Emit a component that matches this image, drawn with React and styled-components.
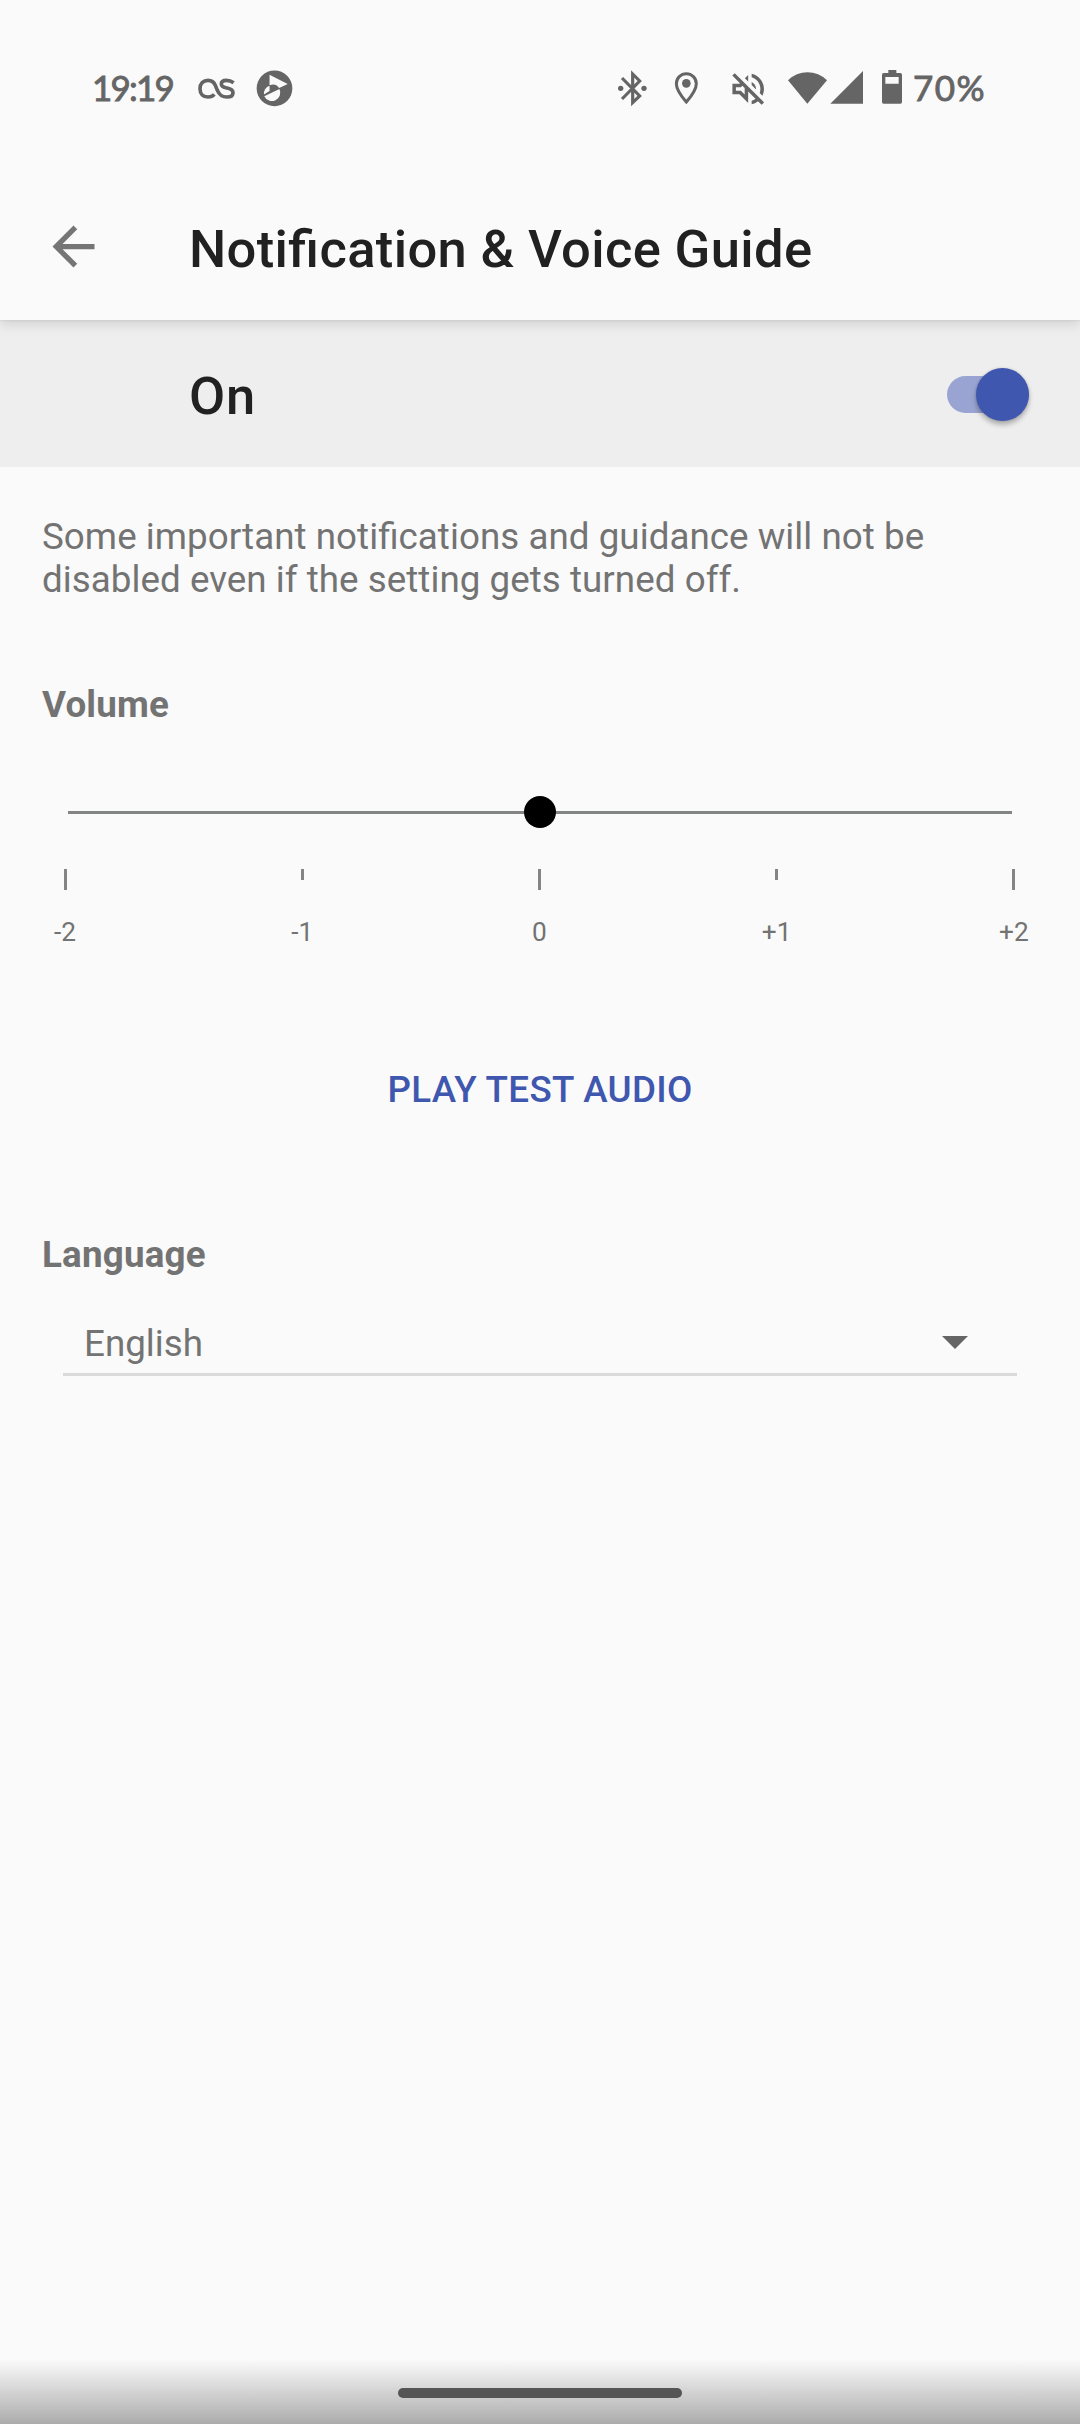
import React, {useState} from 'react';
import styled, {createGlobalStyle} from 'styled-components';

const GlobalStyle = createGlobalStyle`
  body {
    margin: 0;
    background: #fafafa;
    font-family: Roboto, 'Noto Sans', sans-serif;
    font-feature-settings: 'liga' 1;
  }
  button {
    border: 0;
    padding: 0;
    background: none;
    font: inherit;
    color: inherit;
  }
`;

const Screen = styled.div`
  display: flex;
  flex-direction: column;
  height: 2424px;
  width: 1080px;
  overflow: hidden;
  background: #fafafa;
`;
const Header = styled.header`
  height: 320px;
  z-index: 1;
  box-sizing: border-box;
  background: #fafafa;
  box-shadow: 0 4px 12px rgba(0, 0, 0, 0.13), 0 1px 2px rgba(0, 0, 0, 0.05);
`;
const StatusBar = styled.div`
  display: flex;
  justify-content: space-between;
  height: 124px;
  padding: 50px 93px 0 92px;
  box-sizing: border-box;
  color: #656565;
`;
const StatusGroup = styled.div`
  display: flex;
  height: 76px;
  align-items: center;
`;
const StatusText = styled.span`
  font-family: Lato, sans-serif;
  font-size: 35px;
  font-weight: 400;
  line-height: 42px;
  margin-bottom: 3px;
  white-space: nowrap;
  -webkit-text-stroke: 0.9px currentColor;
`;
const Clock = styled (StatusText)`
  width: 81px;
  letter-spacing: -1.8px;
`;
const BatteryLevel = styled (StatusText)`
  width: 74px;
  margin-left: 11px;
  letter-spacing: 1.5px;
`;
const StatusIcon = styled.svg`
  display: block;
  flex: none;
  height: 76px;
  width: ${props => props.$width}px;
  margin-left: ${props => props.$gap || 0}px;
  fill: currentColor;
`;
const Toolbar = styled.div`
  display: flex;
  align-items: flex-start;
  height: 196px;
  box-sizing: border-box;
  padding: 91px 42px 0;
`;
const BackButton = styled.button`
  display: flex;
  width: 147px;
  height: 63px;
  color: #757575;
`;
const Title = styled.h1`
  margin: 3px 0 0;
  font-size: 52.5px;
  font-weight: 500;
  line-height: 62px;
  letter-spacing: 0.36px;
  color: #212121;
  white-space: nowrap;
`;
const SwitchBar = styled.div`
  display: flex;
  align-items: flex-start;
  justify-content: space-between;
  height: 147px;
  padding: 45px 51px 0 189px;
  box-sizing: border-box;
  background: #eeeeee;
`;
const SwitchLabel = styled.span`
  font-size: 52.5px;
  font-weight: 500;
  line-height: 62px;
  letter-spacing: 0.8px;
  color: #212121;
`;
const SwitchTrack = styled.button`
  display: flex;
  align-items: center;
  justify-content: ${props => (props.$on ? 'flex-end' : 'flex-start')};
  width: 82.5px;
  height: 37px;
  margin-top: 11px;
  border-radius: 19px;
  background: ${props => (props.$on ? '#99a4d2' : '#b5b5b5')};
`;
const SwitchThumb = styled.span`
  flex: none;
  width: 53px;
  height: 53px;
  border-radius: 50%;
  background: ${props => (props.$on ? '#3f57ae' : '#fafafa')};
  box-shadow: 0 4px 5px rgba(0, 0, 0, 0.26), 0 0 3px rgba(0, 0, 0, 0.14);
`;
const Content = styled.main`
  display: flex;
  flex: 1;
  flex-direction: column;
  padding: 48px 42px 0;
  font-size: 36.75px;
  line-height: 43px;
  color: #737373;
`;
const Description = styled.p`
  margin: 0;
  letter-spacing: 0.04px;
`;
const SectionTitle = styled.h2`
  margin: ${props => props.$top}px 0 0;
  font-size: 36.75px;
  font-weight: 700;
  line-height: 43px;
  letter-spacing: 0.2px;
`;
const Slider = styled.div`
  display: flex;
  align-items: center;
  justify-content: center;
  height: 32px;
  margin: 70px 26px 0;
  background: linear-gradient(#838584, #838584) center 15px / 100% 3px no-repeat;
`;
const SliderThumb = styled.div`
  width: 32px;
  height: 32px;
  border-radius: 50%;
  background: #000;
`;
const Scale = styled.div`
  display: flex;
  width: 1186px;
  margin: 41px 0 0 -95.6px;
`;
const Step = styled.div`
  display: flex;
  flex: 1;
  flex-direction: column;
  align-items: center;
`;
const Tick = styled.span`
  width: 3px;
  height: ${props => (props.$major ? 21 : 11)}px;
  margin-bottom: ${props => (props.$major ? 27 : 37)}px;
  background: #838584;
`;
const StepLabel = styled.span`
  font-size: 26.25px;
  line-height: 31px;
`;
const PlayButton = styled.button`
  align-self: center;
  margin-top: 120px;
  font-size: 36.75px;
  font-weight: 500;
  line-height: 43px;
  letter-spacing: 0.3px;
  color: #3f57ae;
`;
const Select = styled.button`
  display: flex;
  align-items: flex-start;
  justify-content: space-between;
  height: 54px;
  margin: 46px 21px 0;
  padding: 0 49.5px 0 21px;
  border-bottom: 3px solid #dadada;
  box-sizing: border-box;
  color: #737373;
`;
const DropdownArrow = styled.span`
  width: 0;
  height: 0;
  margin-top: 14px;
  border-top: 13px solid #656565;
  border-left: 13px solid transparent;
  border-right: 13px solid transparent;
`;
const NavigationBar = styled.footer`
  display: flex;
  justify-content: center;
  height: 64px;
  padding-top: 28px;
  box-sizing: border-box;
  background: linear-gradient(#fafafa, #acacac);
`;
const HomeHandle = styled.div`
  width: 284px;
  height: 10px;
  border-radius: 5px;
  background: #555;
`;

// status icons are drawn on a grid of three units per pixel
const LastFmIcon = () => (
  <StatusIcon viewBox="350 0 117 228" $width={39} $gap={24}>
    <path
      d="M460 98C453 93 446 91 438 91C428 91 423 95 423 102C423 110 430 112 440 114C451 116 458 119 458 128C458 137 452 141 440 141C424 141 417 135 411 121L405 106C401 96 395 91 383 91C369 91 359 101 359 116C359 132 369 141 383 141C391 141 397 139 402 133"
      fill="none"
      stroke="currentColor"
      strokeWidth="11"
    />
  </StatusIcon>
);
const PlayerIcon = () => (
  <StatusIcon viewBox="526 0 112 228" $width={37} $gap={20}>
    <circle cx="582" cy="115" r="54" />
    <path d="M567 74L622 102L596 114A24 24 0 0 0 567 106z" fill="#fafafa" />
    <path d="M567 107V123L550 134A25 25 0 0 1 567 107z" fill="#fafafa" />
    <path d="M551 139L597 117A24 24 0 0 1 551 139z" fill="#fafafa" />
  </StatusIcon>
);
const BluetoothIcon = () => (
  <StatusIcon viewBox="54 0 87 228" $width={29}>
    <circle cx="62" cy="115" r="8" />
    <circle cx="132" cy="115" r="8" />
    <path
      d="M66 84L119 138L98 158V72L119 93L66 147"
      fill="none"
      stroke="currentColor"
      strokeWidth="9.5"
    />
  </StatusIcon>
);
const LocationIcon = () => (
  <StatusIcon viewBox="222 0 75 228" $width={25} $gap={27}>
    <path
      d="M259 156C240 134 229 118 229 101A30 30 0 0 1 289 101C289 118 278 134 259 156z"
      fill="none"
      stroke="currentColor"
      strokeWidth="9"
    />
    <circle cx="259" cy="100" r="13" />
  </StatusIcon>
);
const MutedIcon = () => (
  <StatusIcon viewBox="396 0 99 228" $width={33} $gap={33}>
    <path
      transform="translate(381.5 54) scale(5.25)"
      d="M4.34 2.93L2.93 4.34 7.29 8.7 7 9H3v6h4l5 5v-6.59l4.18 4.18c-.65.49-1.38.88-2.18 1.11v2.06c1.34-.3 2.57-.92 3.61-1.75l2.05 2.05 1.41-1.41L4.34 2.93zM10 15.17L7.83 13H5v-2h2.83l.88-.88L10 11.41v3.76zM19 12c0 .82-.15 1.61-.41 2.34l1.53 1.53c.56-1.17.88-2.48.88-3.87 0-4.28-2.99-7.86-7-8.77v2.06c2.89.86 5 3.54 5 6.71zm-7-8l-1.88 1.88L12 7.76V4zm4.5 8c0-1.77-1.02-3.29-2.5-4.03v1.79l2.48 2.48c.01-.08.02-.16.02-.24z"
    />
  </StatusIcon>
);
const WifiIcon = () => (
  <StatusIcon viewBox="21 0 123 228" $width={41} $gap={22}>
    <path d="M24 91A82 82 0 0 1 141 91L82 161z" />
  </StatusIcon>
);
const SignalIcon = () => (
  <StatusIcon viewBox="150 0 102 228" $width={34} $gap={2}>
    <path d="M249 63V161H151z" />
  </StatusIcon>
);
const BatteryIcon = () => (
  <StatusIcon viewBox="306 0 60 228" $width={20} $gap={18}>
    <path
      fillRule="evenodd"
      d="M325 60H349V69H361Q366 69 366 74V156Q366 161 361 161H311Q306 161 306 156V74Q306 69 311 69H325zM316 81V101H356V81z"
    />
  </StatusIcon>
);

const steps = [
  {label: '-2', major: true},
  {label: '-1', major: false},
  {label: '0', major: true},
  {label: '+1', major: false},
  {label: '+2', major: true},
];

const App = () => {
  const [enabled, setEnabled] = useState (true);

  return (
    <Screen>
      <GlobalStyle />
      <Header>
        <StatusBar>
          <StatusGroup>
            <Clock>19:19</Clock>
            <LastFmIcon />
            <PlayerIcon />
          </StatusGroup>
          <StatusGroup>
            <BluetoothIcon />
            <LocationIcon />
            <MutedIcon />
            <WifiIcon />
            <SignalIcon />
            <BatteryIcon />
            <BatteryLevel>70%</BatteryLevel>
          </StatusGroup>
        </StatusBar>
        <Toolbar>
          <BackButton aria-label="Back">
            <svg width="63" height="63" viewBox="0 0 24 24" fill="currentColor">
              <path d="M20 11H7.83l5.59-5.59L12 4l-8 8 8 8 1.41-1.41L7.83 13H20v-2z" />
            </svg>
          </BackButton>
          <Title>Notification &amp; Voice Guide</Title>
        </Toolbar>
      </Header>
      <SwitchBar>
        <SwitchLabel>{enabled ? 'On' : 'Off'}</SwitchLabel>
        <SwitchTrack
          role="switch"
          aria-checked={enabled}
          $on={enabled}
          onClick={() => setEnabled (!enabled)}
        >
          <SwitchThumb $on={enabled} />
        </SwitchTrack>
      </SwitchBar>
      <Content>
        <Description>
          Some important notifications and guidance will not be
          <br />
          disabled even if the setting gets turned off.
        </Description>
        <SectionTitle $top={82}>Volume</SectionTitle>
        <Slider>
          <SliderThumb />
        </Slider>
        <Scale>
          {steps.map (step => (
            <Step key={step.label}>
              <Tick $major={step.major} />
              <StepLabel>{step.label}</StepLabel>
            </Step>
          ))}
        </Scale>
        <PlayButton>PLAY TEST AUDIO</PlayButton>
        <SectionTitle $top={122}>Language</SectionTitle>
        <Select>
          English
          <DropdownArrow />
        </Select>
      </Content>
      <NavigationBar>
        <HomeHandle />
      </NavigationBar>
    </Screen>
  );
};

export default App;
